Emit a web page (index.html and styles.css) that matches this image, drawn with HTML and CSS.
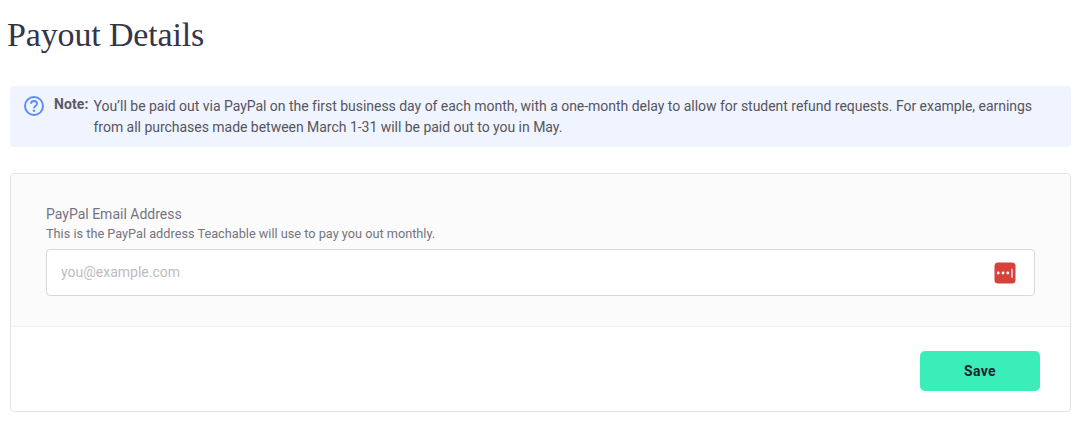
FILE: index.html
```html
<!DOCTYPE html>
<html lang="en">
<head>
<meta charset="utf-8">
<title>Payout Details</title>
<link rel="stylesheet" href="styles.css">
</head>
<body>
<main class="page">
  <h1 class="title">Payout Details</h1>
  <div class="notice">
    <svg class="notice-icon" width="20" height="20" viewBox="0 0 20 20" fill="none" aria-hidden="true">
      <circle cx="10" cy="10" r="9" stroke="#5f8dfc" stroke-width="2"/>
      <path d="M7 7.8C7 6 8.4 5 10 5s3 1 3 2.7c0 2.3-3 2.4-3 4.6" stroke="#5f8dfc" stroke-width="1.9" fill="none"/>
      <circle cx="10" cy="14.8" r="1.2" fill="#5f8dfc"/>
    </svg>
    <strong class="notice-label">Note:</strong>
    <p class="notice-text">You’ll be paid out via PayPal on the first business day of each month, with a one-month delay to allow for student refund requests. For example, earnings from all purchases made between March 1-31 will be paid out to you in May.</p>
  </div>
  <form class="card">
    <div class="card-body">
      <label class="field-label" for="email">PayPal Email Address</label>
      <div class="field-help">This is the PayPal address Teachable will use to pay you out monthly.</div>
      <div class="input-wrap">
        <input class="input" id="email" type="text" placeholder="you@example.com">
        <svg class="lp-icon" width="22" height="22" viewBox="0 0 22 22" aria-hidden="true">
          <rect x="0.5" y="0.5" width="21" height="21" rx="3.5" fill="#d8403b"/>
          <circle cx="4.2" cy="11" r="1.4" fill="#fff"/>
          <circle cx="9" cy="11" r="1.4" fill="#fff"/>
          <circle cx="13.8" cy="11" r="1.4" fill="#fff"/>
          <rect x="17.4" y="6.8" width="1.2" height="9" fill="#fff"/>
        </svg>
      </div>
    </div>
    <div class="card-footer">
      <button class="save" type="button">Save</button>
    </div>
  </form>
</main>
</body>
</html>
```

FILE: styles.css
```css
* { box-sizing: border-box; }
html, body { margin: 0; padding: 0; background: #fff; }
body { font-family: Roboto, "Liberation Sans", sans-serif; color: #44444f; }
.page { padding: 0 6px 0 10px; }
.title {
  margin: 0 0 0 -3px;
  padding-top: 14px;
  height: 86px;
  font-family: "Liberation Serif", serif;
  font-weight: 400;
  font-size: 34px;
  line-height: 42px;
  letter-spacing: -0.15px;
  color: #34344a;
}
.notice {
  display: flex;
  align-items: flex-start;
  height: 61px;
  padding: 10px 14px;
  background: #f0f4ff;
  border-radius: 4px;
}
.notice-icon { flex: none; margin-right: 10px; }
.notice-label { flex: none; font-size: 14px; line-height: 17px; font-weight: 700; letter-spacing: 0.1px; color: #5a5a64; margin-right: 5px; }
.notice-text { margin: 0; font-size: 14px; line-height: 21px; letter-spacing: -0.027px; color: #55555e; }
.card {
  margin-top: 26px;
  border: 1px solid #e3e3e6;
  border-radius: 4px;
  background: #fff;
}
.card-body {
  height: 153px;
  padding: 30px 35px 0;
  background: #fbfbfb;
  border-bottom: 1px solid #f0f0f5;
  border-radius: 4px 4px 0 0;
}
.field-label { display: block; margin-bottom: 1px; font-size: 14px; line-height: 20px; color: #74747f; }
.field-help { font-size: 12.73px; line-height: 18px; color: #74747f; }
.input-wrap { position: relative; margin-top: 6px; }
.input {
  display: block;
  width: 100%;
  height: 47px;
  padding: 0 14px 2px;
  border: 1px solid #d8d8dc;
  border-radius: 4px;
  background: #fff;
  font-family: inherit;
  font-size: 14px;
  color: #44444f;
}
.input::placeholder { color: #bcbcc2; opacity: 1; }
.lp-icon { position: absolute; top: 13px; right: 19px; }
.card-footer { display: flex; justify-content: flex-end; height: 84px; padding: 24px 30px 0 0; }
.save {
  width: 120px;
  height: 40px;
  border: 0;
  border-radius: 5px;
  background: #3beeb9;
  font-family: inherit;
  font-size: 14px;
  font-weight: 700;
  letter-spacing: 0.3px;
  color: #22222e;
}
```
